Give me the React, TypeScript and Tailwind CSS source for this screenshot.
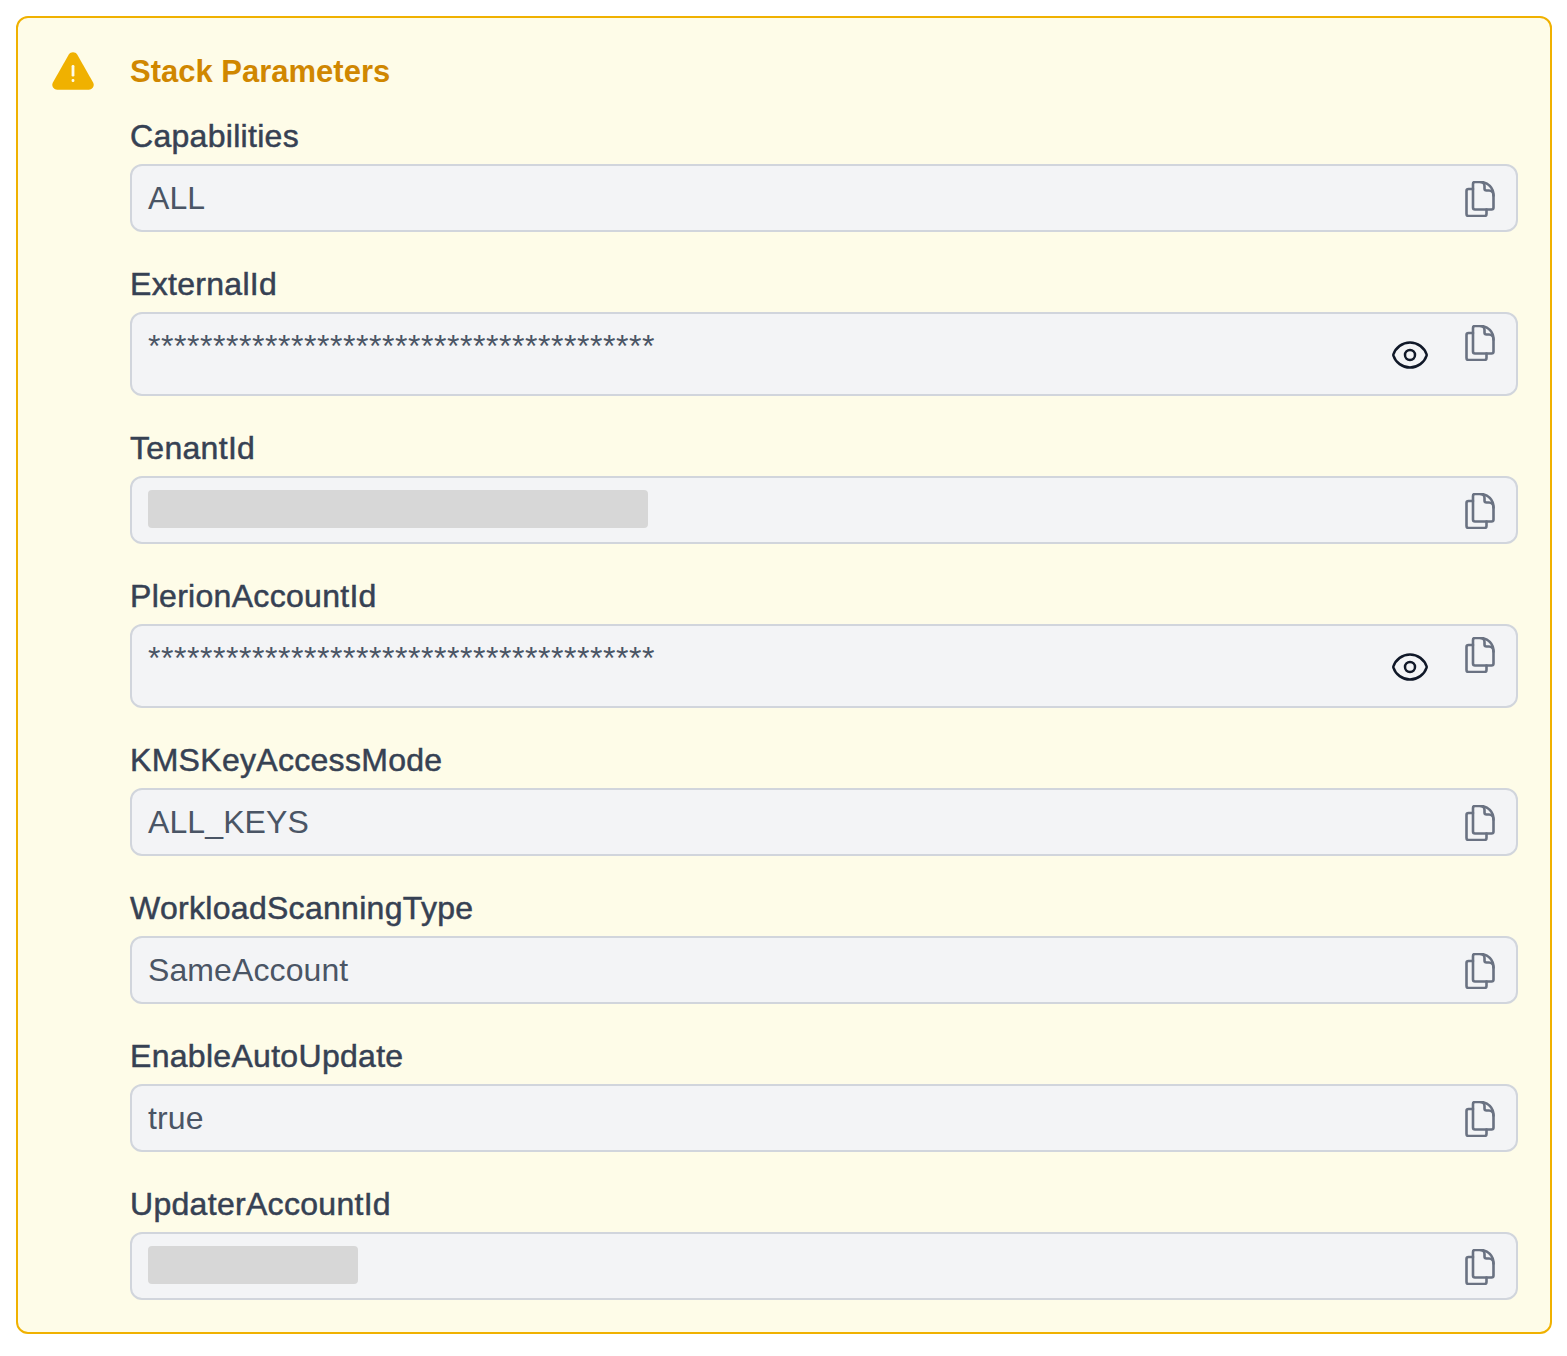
import React from "react";
import { HiOutlineEye } from "react-icons/hi2";

interface Param {
  label: string;
  value?: string;
  secret?: boolean;
  redactWidth?: string;
}

const params: Param[] = [
  { label: "Capabilities", value: "ALL" },
  { label: "ExternalId", value: "*".repeat(39), secret: true },
  { label: "TenantId", redactWidth: "w-[500px]" },
  { label: "PlerionAccountId", value: "*".repeat(39), secret: true },
  { label: "KMSKeyAccessMode", value: "ALL_KEYS" },
  { label: "WorkloadScanningType", value: "SameAccount" },
  { label: "EnableAutoUpdate", value: "true" },
  { label: "UpdaterAccountId", redactWidth: "w-[210px]" },
];

function WarningIcon() {
  return (
    <svg viewBox="0 0 42 38" className="h-[38px] w-[42px]">
      <path
        fill="#f0b100"
        d="M16.8 2.6c1.9-3.200 6.500-3.200 8.400 0l15.900 27.900c1.800 3.200-.5 7.200-4.200 7.200H5.100c-3.700 0-6-4-4.200-7.200L16.800 2.600z"
      />
      <rect x="19.600" y="13" width="2.800" height="11.500" rx="1.200" fill="#fefce8" />
      <rect x="19.600" y="27" width="2.800" height="3" rx="1.200" fill="#fefce8" />
    </svg>
  );
}

function CopyIcon({ className }: { className?: string }) {
  return (
    <svg viewBox="0 0 30 36" fill="none" stroke="currentColor" strokeWidth="2.600" strokeLinejoin="round" strokeLinecap="round" className={className}>
      <path d="M8 8H3.500A2 2 0 0 0 1.500 10v23a2 2 0 0 0 2 2h16a2 2 0 0 0 2-2v-4.500" />
      <path d="M8 3a2 2 0 0 1 2-2h5.500C23 1 28.500 7 28.500 14.500v12a2 2 0 0 1-2 2H10a2 2 0 0 1-2-2V3z" />
      <path d="M15.500 1c2.500 0 4 1.800 4 4v2.500a2 2 0 0 0 2 2H24c2.500 0 4.500 1.800 4.500 5" />
    </svg>
  );
}

function Field({ param }: { param: Param }) {
  return (
    <div>
      <label className="block text-[32px] leading-10 tracking-[0.3px] text-[#364153] [-webkit-text-stroke:0.5px_#364153]">{param.label}</label>
      <div className={`mt-2 flex justify-between rounded-xl border-2 border-[#d1d5dc] bg-[#f3f4f6] pt-3 pr-[21px] pl-4 ${param.secret ? "h-[84px]" : "h-[68px]"}`}>
        {param.redactWidth ? (
          <div className={`h-[38px] ${param.redactWidth} rounded bg-[#d7d7d7]`} />
        ) : (
          <span className={`text-[32px] leading-10 text-[#4a5565] ${param.secret ? "tracking-[0.55px]" : "tracking-[0.1px]"}`}>{param.value}</span>
        )}
        <div className="flex items-start">
          {param.secret && <HiOutlineEye className="mt-[9px] mr-[35px] h-10 w-10 text-[#101828]" />}
          <CopyIcon className={`${param.secret ? "-mt-[1px]" : "mt-[3px]"} h-9 w-[30px] text-[#6a7282]`} />
        </div>
      </div>
    </div>
  );
}

export default function App() {
  return (
    <div className="bg-white pt-4 pl-4 font-['Liberation_Sans',sans-serif]">
      <div className="flex w-[1536px] rounded-xl border-2 border-[#f0b100] bg-[#fefce8] pt-[34px] pr-[32px] pb-[32px] pl-[34px]">
        <div className="w-[78px] shrink-0">
          <WarningIcon />
        </div>
        <div className="min-w-0 flex-1">
          <h3 className="text-[31px] leading-10 font-bold text-[#d08700]">Stack Parameters</h3>
          <div className="mt-6 flex flex-col gap-8">
            {params.map((p) => (
              <Field key={p.label} param={p} />
            ))}
          </div>
        </div>
      </div>
    </div>
  );
}
